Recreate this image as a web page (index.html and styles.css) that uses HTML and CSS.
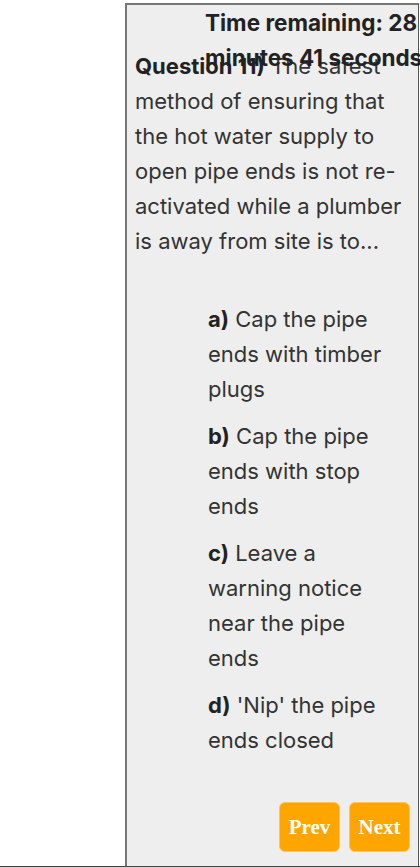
FILE: index.html
```html
<!DOCTYPE html>
<html lang="en">
<head>
<meta charset="utf-8">
<title>Quiz</title>
<link rel="stylesheet" href="styles.css">
</head>
<body>
<div class="page">
  <div class="panel">
    <div class="timer">Time remaining: 28 minutes 41 seconds</div>
    <p class="question"><b>Question 11)</b> The safest method of ensuring that the hot water supply to open pipe ends is not re-activated while a plumber is away from site is to...</p>
    <ul class="options">
      <li><b>a)</b> Cap the pipe ends with timber plugs</li>
      <li><b>b)</b> Cap the pipe ends with stop ends</li>
      <li><b>c)</b> Leave a warning notice near the pipe ends</li>
      <li><b>d)</b> 'Nip' the pipe ends closed</li>
    </ul>
    <div class="nav">
      <button class="btn">Prev</button>
      <button class="btn">Next</button>
    </div>
  </div>
</div>
</body>
</html>
```
FILE: styles.css
```css
html, body {
  margin: 0;
  padding: 0;
  background: #ffffff;
}
.page {
  box-sizing: border-box;
  height: 867px;
  padding: 3px 0 0 125px;
  border-bottom: 1px solid #444;
  overflow: hidden;
  display: flex;
}
.panel {
  position: relative;
  box-sizing: border-box;
  width: 294px;
  flex: none;
  background: #eeeeee;
  border-left: 2px solid #777;
  border-top: 2px solid #777;
  border-right: 1px solid #555;
  display: flex;
  flex-direction: column;
  font-family: Inter, "Noto Sans", sans-serif;
  font-size: 22px;
  line-height: 35px;
  color: #333;
}
.timer {
  position: absolute;
  left: 78px;
  top: 0;
  width: 260px;
  font-weight: bold;
  font-size: 22.5px;
  color: #222;
}
.question {
  margin: 44px 0 0 0;
  padding: 0 6px 0 8px;
}
.question b {
  color: #222;
}
.options {
  list-style: none;
  margin: 43px 0 0 81px;
  padding: 0;
  width: 185px;
  display: flex;
  flex-direction: column;
  gap: 12px;
}
.options b {
  color: #222;
}
.nav {
  margin-top: auto;
  display: flex;
  justify-content: flex-end;
  gap: 9px;
  padding: 0 8px 14px 0;
}
.btn {
  height: 50px;
  width: 61px;
  padding: 0;
  background: #ffa500;
  border: 1px solid #ffc45a;
  border-radius: 6px;
  color: #fff;
  font-family: "Liberation Serif", serif;
  font-weight: bold;
  font-size: 21px;
}
```
